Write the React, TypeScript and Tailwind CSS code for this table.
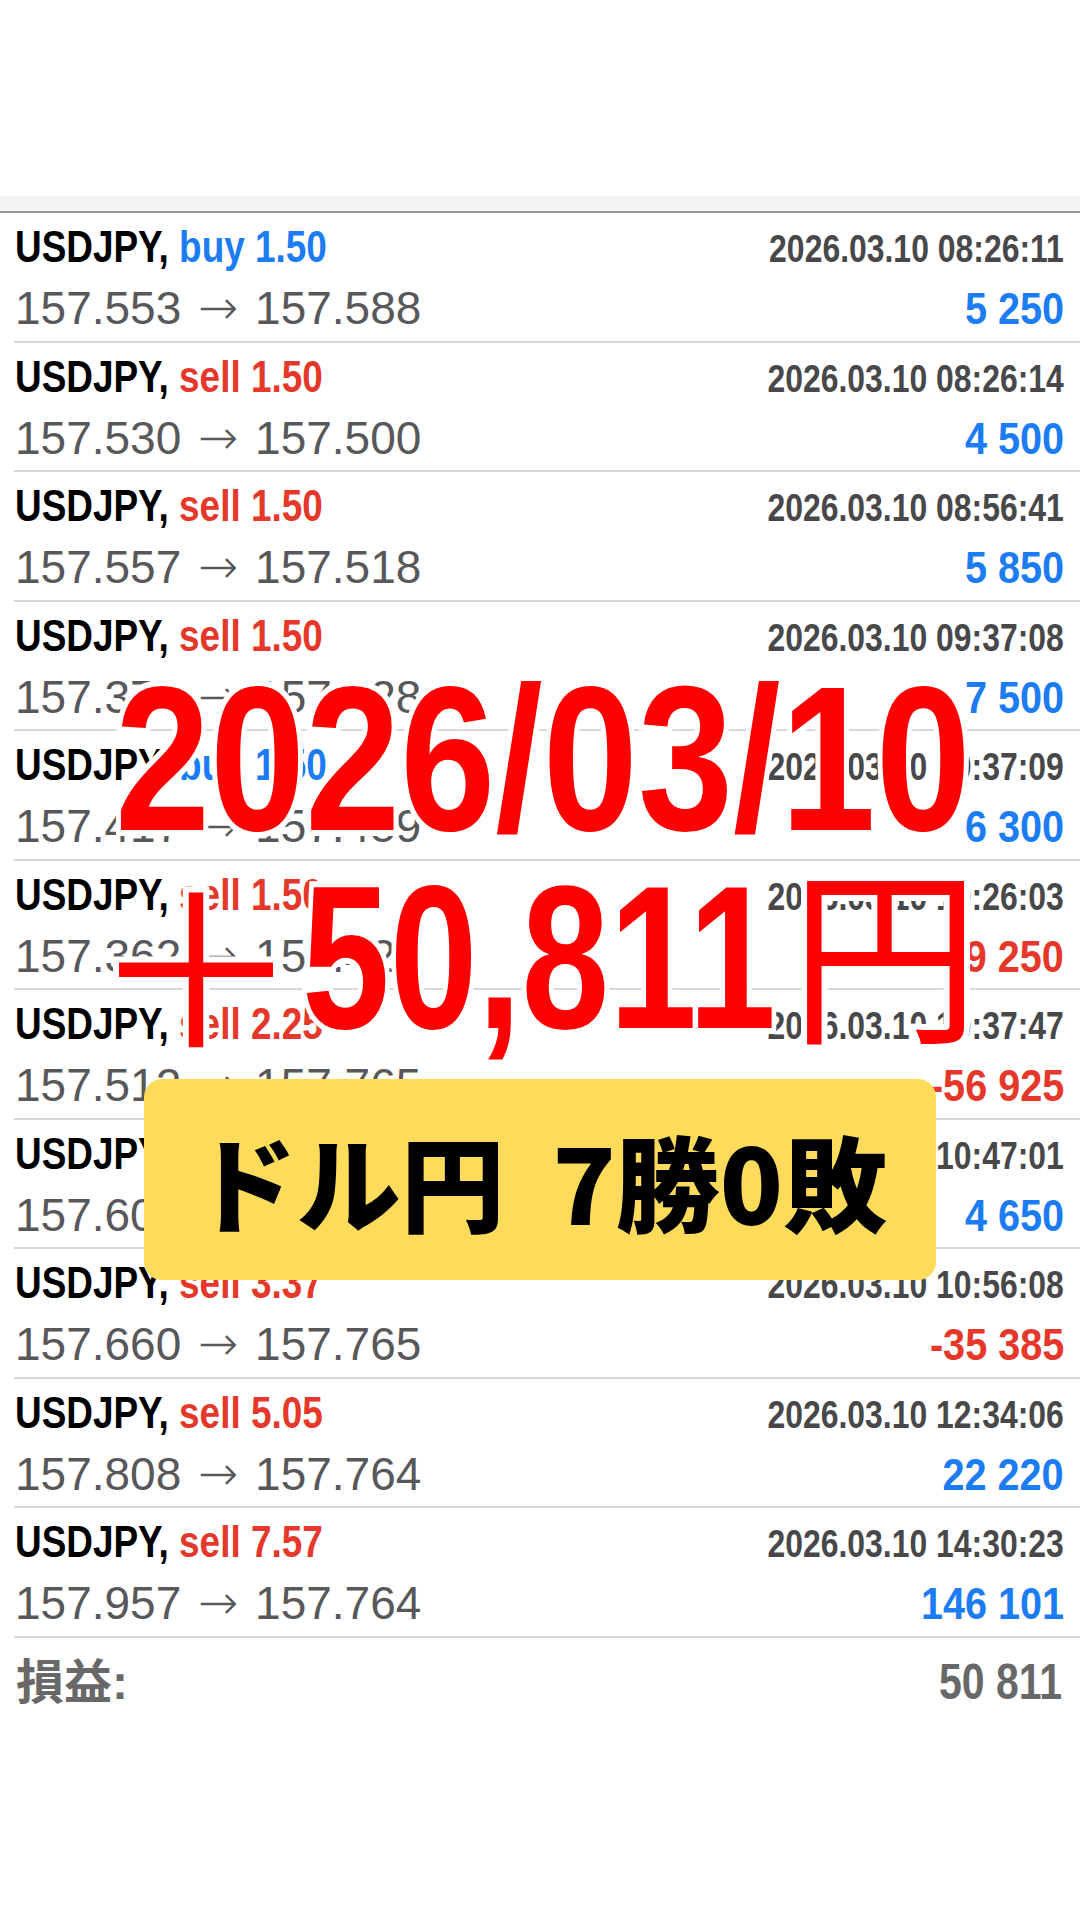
import React from 'react';

type Trade = {
  side: 'buy' | 'sell';
  lot: string;
  time: string;
  open: string;
  close: string;
  profit: string;
};

const trades: Trade[] = [
  { side: 'buy', lot: '1.50', time: '2026.03.10 08:26:11', open: '157.553', close: '157.588', profit: '5 250' },
  { side: 'sell', lot: '1.50', time: '2026.03.10 08:26:14', open: '157.530', close: '157.500', profit: '4 500' },
  { side: 'sell', lot: '1.50', time: '2026.03.10 08:56:41', open: '157.557', close: '157.518', profit: '5 850' },
  { side: 'sell', lot: '1.50', time: '2026.03.10 09:37:08', open: '157.378', close: '157.328', profit: '7 500' },
  { side: 'buy', lot: '1.50', time: '2026.03.10 09:37:09', open: '157.417', close: '157.459', profit: '6 300' },
  { side: 'sell', lot: '1.50', time: '2026.03.10 10:26:03', open: '157.362', close: '157.424', profit: '-9 250' },
  { side: 'sell', lot: '2.25', time: '2026.03.10 10:37:47', open: '157.512', close: '157.765', profit: '-56 925' },
  { side: 'sell', lot: '1.50', time: '2026.03.10 10:47:01', open: '157.601', close: '157.570', profit: '4 650' },
  { side: 'sell', lot: '3.37', time: '2026.03.10 10:56:08', open: '157.660', close: '157.765', profit: '-35 385' },
  { side: 'sell', lot: '5.05', time: '2026.03.10 12:34:06', open: '157.808', close: '157.764', profit: '22 220' },
  { side: 'sell', lot: '7.57', time: '2026.03.10 14:30:23', open: '157.957', close: '157.764', profit: '146 101' },
];

// condensed bold look: Liberation Sans squeezed horizontally
const bold = "font-['Liberation_Sans','Noto_Sans_CJK_JP',sans-serif] font-bold";

function TradeRow({ t }: { t: Trade }) {
  const sideColor = t.side === 'buy' ? 'text-[#1c7cf4]' : 'text-[#e5382a]';
  const profitColor = t.profit.startsWith('-') ? 'text-[#e5382a]' : 'text-[#1c7cf4]';
  return (
    <div className="ml-[14px] h-[129.5px] border-b-2 border-[#d8d8d8] pl-[1px] pr-[16px] pt-[6px]">
      <div className={`flex items-baseline justify-between leading-[56px] ${bold}`}>
        <div className="inline-block origin-left scale-x-[0.82] whitespace-nowrap text-[45px]">
          <span className="text-black">USDJPY,</span>{' '}
          <span className={sideColor}>
            {t.side} {t.lot}
          </span>
        </div>
        <div className="inline-block origin-right scale-x-[0.84] whitespace-nowrap text-[38px] text-[#48484a]">
          {t.time}
        </div>
      </div>
      <div className="mt-[2px] flex items-baseline justify-between leading-[56px]">
        <div className="whitespace-nowrap font-['Liberation_Sans',sans-serif] text-[46px] text-[#58585a]">
          {t.open}{' '}
          <span className="mx-[4px] font-['DejaVu_Sans',sans-serif] text-[48px] font-light">→</span>{' '}
          {t.close}
        </div>
        <div className={`inline-block origin-right scale-x-[0.9] whitespace-nowrap text-[44px] ${bold} ${profitColor}`}>
          {t.profit}
        </div>
      </div>
    </div>
  );
}

export default function App() {
  return (
    <div className="relative h-[1920px] w-[1080px] overflow-hidden bg-white">
      <div className="h-[196px]" />
      <div className="h-[15px] bg-[#f4f4f4]" />
      <div className="border-t-2 border-[#9a9a9a]">
        {trades.map((t, i) => (
          <TradeRow key={i} t={t} />
        ))}
        <div className="flex items-baseline justify-between pl-[16px] pr-[18px] pt-[14px] leading-[60px] text-[#686868]">
          <div className={`${bold} text-[48px]`}>損益:</div>
          <div className={`inline-block origin-right scale-x-[0.82] ${bold} text-[50px]`}>50 811</div>
        </div>
      </div>

      {/* big red overlay */}
      <div className="absolute left-0 right-0 top-[660px] flex flex-col items-center text-[#ff0000] [-webkit-text-stroke:12px_white] [paint-order:stroke_fill]">
        <div className={`${bold} text-[206px] leading-[198px]`}>
          <span className="inline-block w-[850px] whitespace-nowrap">
            <span className="inline-block origin-left scale-x-[0.83]">2026/03/10</span>
          </span>
        </div>
        <div className={`${bold} ml-[90px] self-start whitespace-nowrap text-[205px] leading-[198px]`}>
          <span className="relative top-[22px] font-['Noto_Sans_CJK_JP',sans-serif] text-[212px] font-normal leading-[0px]">＋</span>
          <span className="inline-block w-[488px] whitespace-nowrap">
            <span className="inline-block origin-left scale-x-[0.77]">50,811</span>
          </span>
          <span className="font-['Noto_Sans_CJK_JP',sans-serif] text-[190px] font-normal leading-[0px]">円</span>
        </div>
      </div>

      {/* yellow badge */}
      <div className="absolute left-[144px] top-[1079px] flex h-[201px] w-[792px] items-center justify-center rounded-[18px] bg-[#fedb5b]">
        <span className="whitespace-pre font-['Noto_Sans_CJK_JP',sans-serif] text-[104px] font-black leading-none text-black">
          ドル円  7勝0敗
        </span>
      </div>
    </div>
  );
}
